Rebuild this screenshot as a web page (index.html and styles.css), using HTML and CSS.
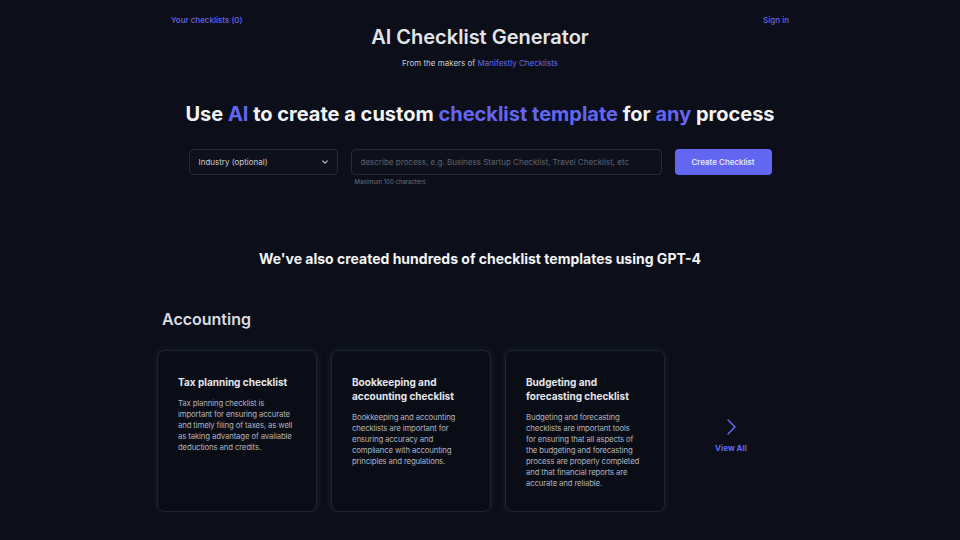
FILE: index.html
```html
<!DOCTYPE html>
<html lang="en">
<head>
    <meta charset="UTF-8">
    <meta name="viewport" content="width=device-width, initial-scale=1.0">
    <title>AI Checklist Generator</title>
    <link rel="stylesheet" href="styles.css">
</head>
<body>

    <div class="page">
        <div class="top-links">
            <a href="#">Your checklists (0)</a>
            <a href="#">Sign in</a>
        </div>

        <h1 class="title">AI Checklist Generator</h1>
        <p class="makers">From the makers of <a href="#">Manifestly Checklists</a></p>

        <h2 class="headline">Use <span class="accent">AI</span> to create a custom <span class="accent">checklist template</span> for <span class="accent">any</span> process</h2>

        <div class="form-row">
            <div class="select">
                <span>Industry (optional)</span>
                <svg width="8" height="8" viewBox="0 0 10 10"><path d="M2 3.5 L5 6.5 L8 3.5" fill="none" stroke="#c7cad3" stroke-width="1.3" stroke-linecap="round" stroke-linejoin="round"/></svg>
            </div>
            <div class="field">
                <input type="text" placeholder="describe process, e.g. Business Startup Checklist, Travel Checklist, etc">
                <div class="hint">Maximum 100 characters</div>
            </div>
            <button class="create-btn">Create Checklist</button>
        </div>

        <h3 class="also">We've also created hundreds of checklist templates using GPT-4</h3>

        <h4 class="category">Accounting</h4>

        <div class="cards">
            <div class="card">
                <div class="card-title">Tax planning checklist</div>
                <p>Tax planning checklist is important for ensuring accurate and timely filing of taxes, as well as taking advantage of available deductions and credits.</p>
            </div>
            <div class="card">
                <div class="card-title">Bookkeeping and accounting checklist</div>
                <p>Bookkeeping and accounting checklists are important for ensuring accuracy and compliance with accounting principles and regulations.</p>
            </div>
            <div class="card">
                <div class="card-title">Budgeting and forecasting checklist</div>
                <p>Budgeting and forecasting checklists are important tools for ensuring that all aspects of the budgeting and forecasting process are properly completed and that financial reports are accurate and reliable.</p>
            </div>
            <a class="view-all" href="#">
                <svg width="14" height="18" viewBox="0 0 14 18"><path d="M4 2 L11 9 L4 16" fill="none" stroke="#6366f1" stroke-width="1.5" stroke-linecap="round" stroke-linejoin="round"/></svg>
                <span>View All</span>
            </a>
        </div>
    </div>

</body>
</html>
```

FILE: styles.css
```css
body {
    margin: 0;
    background-color: #0c0f19;
    font-family: Inter, 'Noto Sans', sans-serif;
    color: #e5e7eb;
}

a {
    color: #6366f1;
    text-decoration: none;
}

.page {
    width: 640px;
    margin: 0 auto;
    padding-top: 15px;
    display: flex;
    flex-direction: column;
    align-items: center;
}

.top-links {
    width: 100%;
    box-sizing: border-box;
    padding: 0 11px;
    display: flex;
    justify-content: space-between;
    font-size: 8px;
    font-weight: 500;
    height: 10px;
}

.title {
    margin: 0;
    font-size: 20px;
    font-weight: 600;
    color: #e3e5ea;
    line-height: 24px;
}

.makers {
    margin: 9px 0 0;
    font-size: 8px;
    color: #c9ccd4;
}

.headline {
    margin: 33px 0 0;
    font-size: 20px;
    font-weight: 700;
    color: #f3f4f6;
    line-height: 26px;
}

.accent {
    color: #6366f1;
}

.form-row {
    margin-top: 22px;
    display: flex;
    align-items: flex-start;
    gap: 13px;
}

.select {
    width: 149px;
    height: 26px;
    box-sizing: border-box;
    border: 1px solid #272b38;
    border-radius: 4px;
    background: #0e111b;
    padding: 0 8px 0 9px;
    display: flex;
    align-items: center;
    justify-content: space-between;
    font-size: 8px;
    color: #c9ccd4;
}

.field {
    display: flex;
    flex-direction: column;
}

.field input {
    width: 311px;
    height: 26px;
    box-sizing: border-box;
    border: 1px solid #272b38;
    border-radius: 4px;
    background: #0e111b;
    padding: 0 9px;
    font-family: inherit;
    font-size: 8px;
    color: #c9ccd4;
    outline: none;
}

.field input::placeholder {
    color: #5f6370;
}

.hint {
    margin: 3px 0 0 4px;
    font-size: 6px;
    color: #6b6f7c;
}

.create-btn {
    width: 97px;
    height: 26px;
    border: none;
    border-radius: 4px;
    background: #6366f1;
    color: #eef0ff;
    font-family: inherit;
    font-size: 8px;
    font-weight: 500;
    cursor: pointer;
}

.also {
    margin: 65px 0 0;
    font-size: 14px;
    font-weight: 700;
    color: #f3f4f6;
}

.category {
    align-self: flex-start;
    margin: 42px 0 0 2px;
    font-size: 16px;
    font-weight: 600;
    color: #d9dce2;
}

.cards {
    align-self: flex-start;
    margin: 21px 0 0 -3px;
    display: flex;
    gap: 14px;
}

.card {
    width: 160px;
    height: 162px;
    box-sizing: border-box;
    padding: 24px 23px 0 20px;
    background: #0b0d16;
    border: 1px solid #1e2432;
    border-radius: 8px;
    box-shadow: 0 0 6px rgba(40, 55, 80, 0.45);
}

.card-title {
    font-size: 10px;
    font-weight: 700;
    line-height: 14px;
    color: #e5e7eb;
}

.card p {
    margin: 9px 0 0;
    font-size: 7.8px;
    letter-spacing: -0.15px;
    line-height: 11px;
    color: #aeb2bc;
}

.view-all {
    width: 104px;
    padding-top: 8px;
    display: flex;
    flex-direction: column;
    align-items: center;
    justify-content: center;
    gap: 7px;
    font-size: 8px;
    font-weight: 700;
}
```
